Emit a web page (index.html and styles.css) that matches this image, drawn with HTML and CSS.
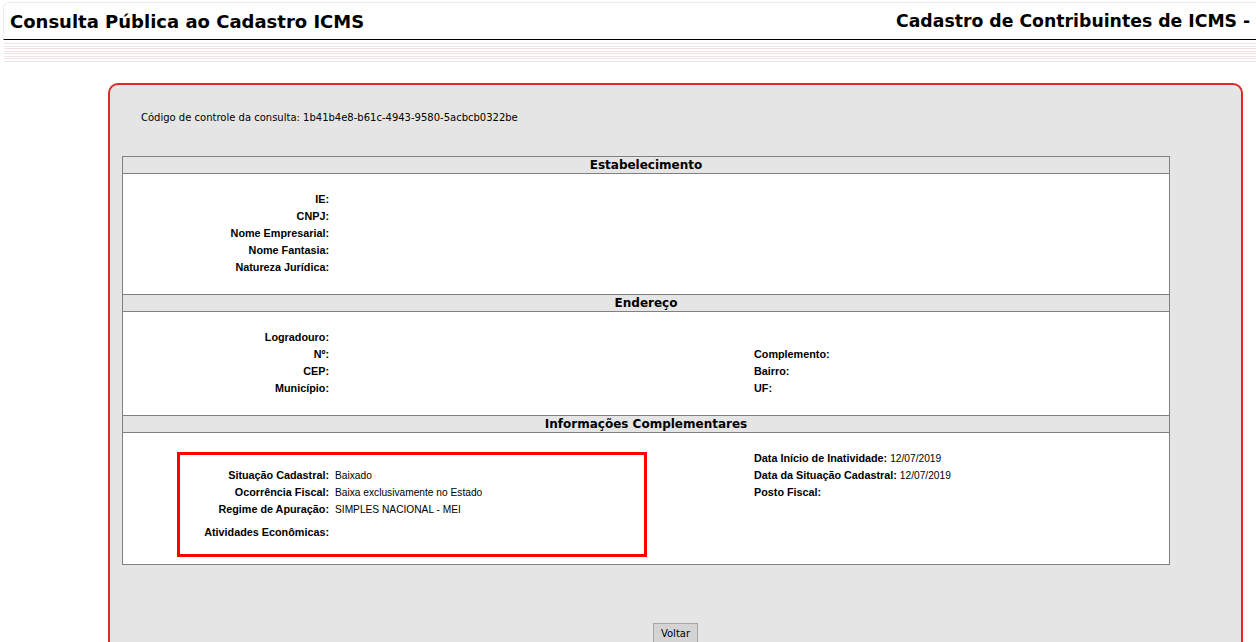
FILE: index.html
```html
<!DOCTYPE html>
<html>
<head>
    <title>Consulta Pública ao Cadastro ICMS</title>
    <link rel="stylesheet" href="styles.css">
</head>
<body>
    <div class="cabecalho">
        <h1 class="titulo">Consulta Pública ao Cadastro ICMS</h1>
        <h1 class="titulo titulo-direita">Cadastro de Contribuintes de ICMS - Sintegra</h1>
    </div>
    <div class="listras"></div>

    <div class="moldura">
        <p class="controle">Código de controle da consulta: 1b41b4e8-b61c-4943-9580-5acbcb0322be</p>

        <div class="quadro">
            <div class="secao-titulo">Estabelecimento</div>
            <div class="secao-corpo corpo-estab">
                <div class="campos">
                    <span class="rotulo">IE:</span><span class="valor"></span>
                    <span class="rotulo">CNPJ:</span><span class="valor"></span>
                    <span class="rotulo">Nome Empresarial:</span><span class="valor"></span>
                    <span class="rotulo">Nome Fantasia:</span><span class="valor"></span>
                    <span class="rotulo">Natureza Jurídica:</span><span class="valor"></span>
                </div>
            </div>

            <div class="secao-titulo">Endereço</div>
            <div class="secao-corpo corpo-end">
                <div class="metade">
                    <div class="campos">
                        <span class="rotulo">Logradouro:</span><span class="valor"></span>
                        <span class="rotulo">Nº:</span><span class="valor"></span>
                        <span class="rotulo">CEP:</span><span class="valor"></span>
                        <span class="rotulo">Município:</span><span class="valor"></span>
                    </div>
                </div>
                <div class="metade metade-direita desce">
                    <div class="linha"><b>Complemento:</b></div>
                    <div class="linha"><b>Bairro:</b></div>
                    <div class="linha"><b>UF:</b></div>
                </div>
            </div>

            <div class="secao-titulo">Informações Complementares</div>
            <div class="secao-corpo corpo-info">
                <div class="metade">
                    <div class="destaque">
                        <div class="campos campos-estreito">
                            <span class="rotulo">Situação Cadastral:</span><span class="valor">Baixado</span>
                            <span class="rotulo">Ocorrência Fiscal:</span><span class="valor">Baixa exclusivamente no Estado</span>
                            <span class="rotulo">Regime de Apuração:</span><span class="valor">SIMPLES NACIONAL - MEI</span>
                            <span class="rotulo espaco">Atividades Econômicas:</span><span class="valor espaco"></span>
                        </div>
                    </div>
                </div>
                <div class="metade metade-direita sobe">
                    <div class="linha"><b>Data Início de Inatividade:</b> <span class="valor">12/07/2019</span></div>
                    <div class="linha"><b>Data da Situação Cadastral:</b> <span class="valor">12/07/2019</span></div>
                    <div class="linha"><b>Posto Fiscal:</b></div>
                </div>
            </div>
        </div>

        <div class="acoes">
            <button class="btn-voltar" onclick="history.back()">Voltar</button>
        </div>
    </div>
</body>
</html>
```

FILE: styles.css
```css
body {
    margin: 0;
    background: #fff;
    color: #000;
    font-family: "DejaVu Sans", Verdana, sans-serif;
    overflow: hidden;
}
.cabecalho {
    margin: 2px 0 0 3px;
    height: 36px;
    border: 1px solid #ebebeb;
    border-bottom: 1px solid #000;
    border-right: none;
    border-radius: 6px 0 0 0;
    display: flex;
    align-items: center;
    overflow: hidden;
    white-space: nowrap;
}
.titulo {
    margin: 0;
    padding-left: 6px;
    font-size: 18px;
    font-weight: bold;
    flex: 0 0 880px;
}
.titulo-direita {
    flex: 0 0 auto;
    font-size: 17.3px;
}
.listras {
    margin: 3px 0 0 4px;
    height: 20px;
    background: repeating-linear-gradient(to bottom,
        #f3dede 0, #f3dede 1px,
        #fff 1px, #fff 2.5px,
        #e6e6e6 2.5px, #e6e6e6 3.5px,
        #fff 3.5px, #fff 5px);
}
.moldura {
    box-sizing: border-box;
    width: 1135px;
    height: 640px;
    margin: 20px 0 0 108px;
    background: #e5e5e5;
    border: 2px solid #dc2a2a;
    border-radius: 10px 10px 0 0;
}
.controle {
    margin: 0;
    padding: 26px 0 0 31px;
    height: 45px;
    font-size: 10px;
    line-height: 14px;
}
.quadro {
    width: 1048px;
    box-sizing: border-box;
    margin-left: 12px;
    border: 1px solid #808080;
    border-top: none;
    background: #fff;
}
.secao-titulo {
    height: 16px;
    line-height: 16px;
    background: #e5e5e5;
    border-top: 1px solid #808080;
    border-bottom: 1px solid #808080;
    text-align: center;
    font-size: 12px;
    font-weight: bold;
}
.secao-corpo {
    display: flex;
}
.corpo-estab {
    padding: 17px 0 18px;
}
.corpo-end {
    padding: 17px 0 18px;
}
.corpo-info {
    padding: 19px 0 7px;
}
.metade {
    box-sizing: border-box;
    width: 50%;
    flex: 0 0 50%;
}
.metade-direita {
    padding-left: 108px;
}
.sobe {
    margin-top: -2px;
}
.desce {
    padding-top: 17px;
}
.campos {
    display: grid;
    grid-template-columns: 206px auto;
    column-gap: 6px;
    font-family: "Liberation Sans", Arial, sans-serif;
    line-height: 17px;
}
.campos-estreito {
    grid-template-columns: 149px auto;
}
.rotulo {
    text-align: right;
    font-weight: bold;
    font-size: 10.8px;
}
.valor {
    font-size: 10.2px;
    font-weight: normal;
}
.espaco {
    margin-top: 6px;
}
.linha {
    font-family: "Liberation Sans", Arial, sans-serif;
    line-height: 17px;
    font-size: 10.8px;
}
.destaque {
    margin-left: 54px;
    width: 464px;
    border: 3px solid #f00;
    padding: 12px 0 13px;
}
.acoes {
    padding-top: 58px;
}
.btn-voltar {
    display: block;
    margin: 0 auto;
    font-family: "DejaVu Sans", Verdana, sans-serif;
    font-size: 10px;
    background: #d4d4d4;
    border: 1px solid #a6a6a6;
    padding: 2px 7px;
    height: 20px;
    color: #000;
}
```
